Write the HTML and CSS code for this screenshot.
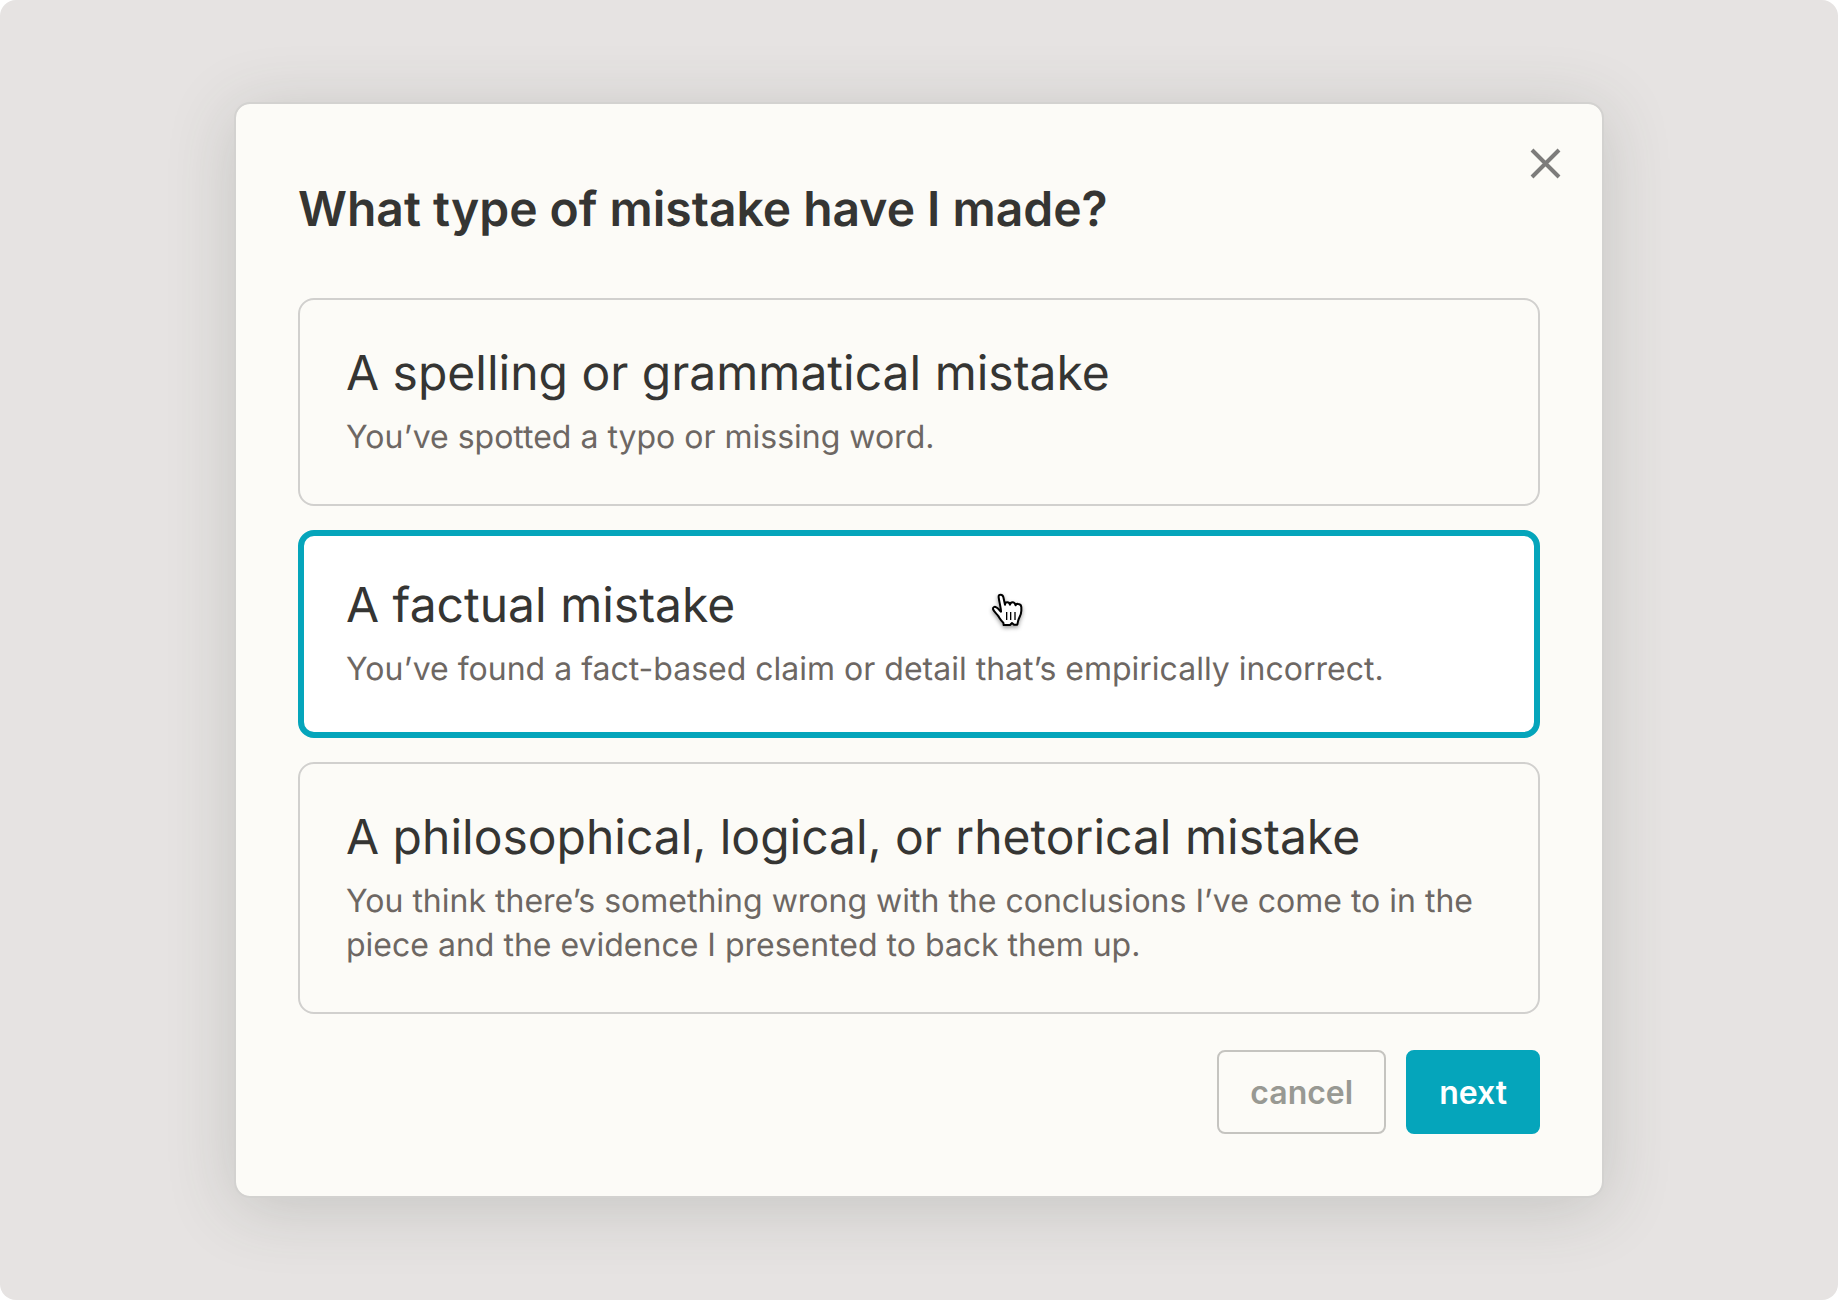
FILE: index.html
```html
<!DOCTYPE html>
<html lang="en">
<head>
<meta charset="utf-8">
<meta name="viewport" content="width=device-width, initial-scale=1">
<title>Report a mistake</title>
<link rel="stylesheet" href="styles.css">
</head>
<body>
<main class="backdrop">
  <form class="dialog" role="dialog" aria-labelledby="dialog-title">
    <button class="close" type="button" aria-label="Close">
      <svg viewBox="0 0 32 32" width="32" height="32" aria-hidden="true"><path d="M2 2 29 29M29 2 2 29"/></svg>
    </button>
    <h1 class="title" id="dialog-title">What type of mistake have I made?</h1>
    <div class="options" role="radiogroup" aria-labelledby="dialog-title">
      <label class="option">
        <input class="option-input" type="radio" name="mistake" value="spelling">
        <span class="option-title">A spelling or grammatical mistake</span>
        <span class="option-text">You’ve spotted a typo or missing word.</span>
      </label>
      <label class="option">
        <input class="option-input" type="radio" name="mistake" value="factual" checked>
        <span class="option-title">A factual mistake</span>
        <span class="option-text">You’ve found a fact-based claim or detail that’s empirically incorrect.</span>
        <svg class="pointer" viewBox="60 66 108 114" width="36" height="38" aria-hidden="true">
          <path class="pointer-hand" d="M86 82C85 76 88 74 92 74C97 74 99 77 100 81L105 104C105 99 108 97 112 97C117 97 119 100 120 104C121 99 124 97 128 97C133 97 135 100 137 106C138 102 141 101 145 102C152 103 154 106 154 112L154 122C154 136 145 145 144 154L142 164L132 164L126 159L120 165L101 165L100 158C92 151 89 144 84 137C80 131 70 124 69 117C68 111 74 109 79 112C85 115 88 121 93 125C93 113 88 98 86 82Z"/>
          <path class="pointer-lines" d="M110 126V150M122 126V150M135 126V150"/>
        </svg>
      </label>
      <label class="option">
        <input class="option-input" type="radio" name="mistake" value="logical">
        <span class="option-title">A philosophical, logical, or rhetorical mistake</span>
        <span class="option-text">You think there’s something wrong with the conclusions I’ve come to in the piece and the evidence I presented to back them up.</span>
      </label>
    </div>
    <div class="actions">
      <button class="button" type="button">cancel</button>
      <button class="button button-primary" type="submit">next</button>
    </div>
  </form>
</main>
</body>
</html>
```
FILE: styles.css
```css
* {
  box-sizing: border-box;
}

body {
  margin: 0;
  background: #fff;
  color: #353533;
  font-family: Inter, "Liberation Sans", sans-serif;
  font-optical-sizing: none;
  text-rendering: geometricPrecision;
}

.backdrop {
  display: flex;
  align-items: center;
  justify-content: center;
  min-height: 100vh;
  padding: 48px 24px;
  background: #e6e3e2;
  border-radius: 16px;
}

.dialog {
  position: relative;
  width: 100%;
  max-width: 1370px;
  padding: 78px 62px 62px;
  background: #fcfbf7;
  background-clip: padding-box;
  border: 2px solid #d3d2d0;
  border-radius: 16px;
  box-shadow: 0 10px 68px rgba(60, 68, 60, 0.19);
}

.close {
  position: absolute;
  top: 28px;
  right: 24px;
  display: grid;
  place-items: center;
  width: 64px;
  height: 64px;
  padding: 0;
  background: none;
  border: 0;
  cursor: pointer;
}

.close path {
  fill: none;
  stroke: #7d7c7b;
  stroke-width: 4;
}

.title {
  margin: 0 0 62px;
  font-size: 48px;
  font-weight: 600;
  line-height: 54px;
}

.options {
  display: flex;
  flex-direction: column;
  gap: 24px;
}

.option {
  position: relative;
  display: flex;
  flex-direction: column;
  gap: 15px;
  padding: 46px 46px 45px;
  border: 2px solid #d1d0ce;
  border-radius: 16px;
  cursor: pointer;
}

.option:has(:checked) {
  padding: 42px 42px 41px;
  background: #fff;
  border: 6px solid #05a5bb;
}

.option-input {
  position: absolute;
  opacity: 0;
  pointer-events: none;
}

.option-title {
  font-size: 48px;
  line-height: 54px;
}

.option-text {
  color: #6d6763;
  font-size: 32px;
  line-height: 44px;
}

.pointer {
  position: absolute;
  top: 56px;
  left: 686px;
  overflow: visible;
  filter: drop-shadow(0 2px 2px rgba(0, 0, 0, 0.4));
}

.pointer-hand {
  fill: #fff;
  stroke: #000;
  stroke-width: 6;
  stroke-linejoin: round;
}

.pointer-lines {
  fill: none;
  stroke: #000;
  stroke-width: 4;
}

.actions {
  display: flex;
  justify-content: flex-end;
  gap: 20px;
  margin-top: 36px;
}

.button {
  padding: 19px 31px 17px;
  background: transparent;
  border: 2px solid #c5c4c0;
  border-radius: 8px;
  color: #989993;
  font: inherit;
  font-size: 32px;
  font-weight: 600;
  line-height: 44px;
  cursor: pointer;
}

.button-primary {
  background: #05a5bb;
  border-color: #05a5bb;
  color: #fff;
}
```
